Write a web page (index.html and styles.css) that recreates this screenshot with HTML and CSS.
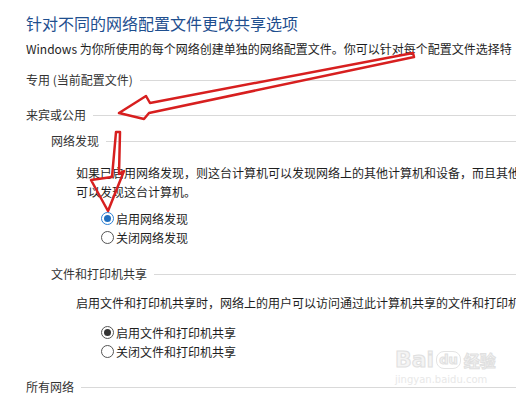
FILE: index.html
```html
<!DOCTYPE html>
<html lang="zh-CN">
<head>
    <meta charset="UTF-8">
    <title>高级共享设置</title>
    <link rel="stylesheet" href="styles.css">
</head>
<body>
    <h1 class="title">针对不同的网络配置文件更改共享选项</h1>
    <p class="intro">Windows 为你所使用的每个网络创建单独的网络配置文件。你可以针对每个配置文件选择特</p>

    <div class="profile current">
        <div class="heading"><span>专用 (当前配置文件)</span></div>
    </div>

    <div class="profile">
        <div class="heading"><span>来宾或公用</span></div>

        <div class="group discovery">
            <div class="heading"><span>网络发现</span></div>
            <div class="group-body">
                <p class="desc">如果已启用网络发现，则这台计算机可以发现网络上的其他计算机和设备，而且其他<br>可以发现这台计算机。</p>
                <div class="options">
                    <label class="option"><span class="radio checked focus"></span>启用网络发现</label>
                    <label class="option"><span class="radio"></span>关闭网络发现</label>
                </div>
            </div>
        </div>

        <div class="group sharing">
            <div class="heading"><span>文件和打印机共享</span></div>
            <div class="group-body">
                <p class="desc">启用文件和打印机共享时，网络上的用户可以访问通过此计算机共享的文件和打印机</p>
                <div class="options">
                    <label class="option"><span class="radio checked"></span>启用文件和打印机共享</label>
                    <label class="option"><span class="radio"></span>关闭文件和打印机共享</label>
                </div>
            </div>
        </div>
    </div>

    <div class="profile">
        <div class="heading"><span>所有网络</span></div>
    </div>

    <!-- red annotation arrows -->
    <svg class="marks" width="516" height="400" viewBox="0 0 516 400">
        <polygon points="119,113 146,96 150,103 413,53 414,57 149,113 144,119" />
        <polygon points="116,132 120,132 119,174 124,171 108,211 91,180 112,177" />
    </svg>

    <div class="watermark">
        <div class="wm-logo">Bai<span class="paw">du</span><span class="wm-cn">经验</span></div>
        <div class="wm-url">jingyan.baidu.com</div>
    </div>
</body>
</html>
```

FILE: styles.css
```css
body {
    margin: 0;
    padding: 11px 0 0 26px;
    background: #fff;
    color: #1e1e1e;
    font-family: "Noto Sans CJK SC", sans-serif;
    font-size: 12px;
    white-space: nowrap;
    overflow: hidden;
}

.title {
    margin: 0;
    font-size: 16px;
    font-weight: normal;
    line-height: 24px;
    color: #1f4f8f;
}

.intro {
    margin: 5px 0 0;
    line-height: 18px;
}

.profile {
    margin-top: 17px;
}
.profile.current {
    margin-top: 13px;
}

/* heading with the rule running to the right edge */
.heading {
    display: flex;
    align-items: center;
    line-height: 18px;
    color: #333;
}
.heading::after {
    content: "";
    flex: 1;
    height: 1px;
    margin: 1px 0 0 7px;
    background: #d9d9d9;
}

.group {
    padding-left: 25px;
    margin-top: 18px;
}
.heading + .group {
    margin-top: 8px;
}

.group-body {
    padding-left: 25px;
}

.desc {
    margin: 10px 0 0;
    line-height: 19px;
}
.discovery .desc {
    margin-top: 13px;
}

.options {
    margin-top: 11px;
    padding-left: 25px;
}
.discovery .options {
    margin-top: 8px;
}

.option {
    display: flex;
    align-items: center;
    line-height: 19px;
}

.radio {
    display: flex;
    align-items: center;
    justify-content: center;
    box-sizing: border-box;
    width: 13px;
    height: 13px;
    margin-right: 2px;
    border: 1px solid #555;
    border-radius: 50%;
}
.radio.checked::after {
    content: "";
    width: 7px;
    height: 7px;
    border-radius: 50%;
    background: #333;
}
.radio.focus {
    border-color: #2b7fd4;
}
.radio.focus::after {
    background: #1f6fc0;
}

.marks {
    position: absolute;
    top: 0;
    left: 0;
    pointer-events: none;
}
.marks polygon {
    fill: none;
    stroke: #d71f1f;
    stroke-width: 2.5;
    stroke-linejoin: round;
}

.watermark {
    position: absolute;
    left: 395px;
    top: 346px;
    color: #f4f4f4;
    pointer-events: none;
}
.wm-logo {
    display: flex;
    align-items: center;
    font-family: "DejaVu Sans", sans-serif;
    font-weight: bold;
    font-size: 22px;
    line-height: 28px;
    -webkit-text-stroke: 1px #e0e0e0;
}
.paw {
    margin-left: 2px;
    padding: 0 2px;
    font-size: 13px;
    line-height: 16px;
    border: 1px solid #e4e4e4;
    border-radius: 8px;
}
.wm-cn {
    margin-left: 3px;
    font-family: "Noto Sans CJK SC", sans-serif;
    font-size: 16px;
}
.wm-url {
    font-family: "DejaVu Sans", sans-serif;
    font-size: 10px;
    line-height: 12px;
    color: #e8e8e8;
}
```
